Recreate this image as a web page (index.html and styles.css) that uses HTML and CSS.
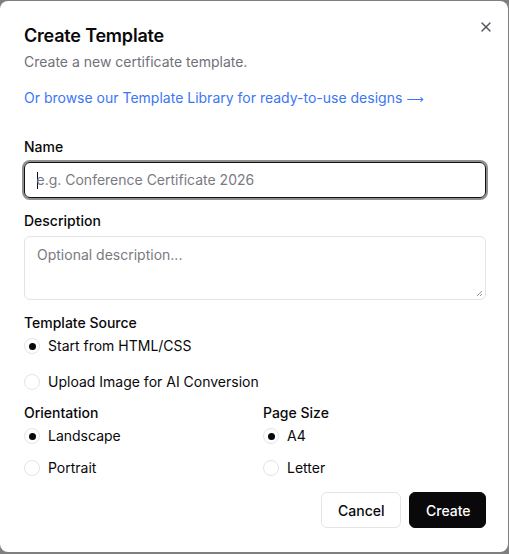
FILE: index.html
```html
<!DOCTYPE html>
<html lang="en">
<head>
<meta charset="utf-8">
<title>Create Template</title>
<link rel="stylesheet" href="styles.css">
</head>
<body>
<div class="dialog">
  <button class="close" aria-label="Close">
    <svg width="16" height="16" viewBox="0 0 24 24" fill="none" stroke="currentColor" stroke-width="2" stroke-linecap="round" stroke-linejoin="round"><path d="M18 6 6 18"/><path d="m6 6 12 12"/></svg>
  </button>
  <div class="header">
    <h2 class="title">Create Template</h2>
    <p class="subtitle">Create a new certificate template.</p>
    <a class="library-link" href="#">Or browse our Template Library for ready-to-use designs <span class="arrow">⟶</span></a>
  </div>
  <form class="form">
    <div class="field">
      <label class="label">Name</label>
      <div class="input focused"><span class="caret"></span><span class="placeholder">e.g. Conference Certificate 2026</span></div>
    </div>
    <div class="field">
      <label class="label">Description</label>
      <div class="textarea"><span class="placeholder">Optional description...</span><svg class="grip" width="8" height="8" viewBox="0 0 8 8"><path d="M7 2 2 7M7 5 5 7" stroke="#9a9a9a" stroke-width="1"/></svg></div>
    </div>
    <div class="field">
      <span class="label">Template Source</span>
      <div class="radios source">
        <div class="option"><span class="radio checked"></span><span>Start from HTML/CSS</span></div>
        <div class="option"><span class="radio"></span><span>Upload Image for AI Conversion</span></div>
      </div>
    </div>
    <div class="columns">
      <div class="field">
        <span class="label">Orientation</span>
        <div class="radios">
          <div class="option"><span class="radio checked"></span><span>Landscape</span></div>
          <div class="option"><span class="radio"></span><span>Portrait</span></div>
        </div>
      </div>
      <div class="field">
        <span class="label">Page Size</span>
        <div class="radios">
          <div class="option"><span class="radio checked"></span><span>A4</span></div>
          <div class="option"><span class="radio"></span><span>Letter</span></div>
        </div>
      </div>
    </div>
    <div class="footer">
      <button type="button" class="btn btn-outline">Cancel</button>
      <button type="button" class="btn btn-primary">Create</button>
    </div>
  </form>
</div>
</body>
</html>
```

FILE: styles.css
```css
* { box-sizing: border-box; }
html, body { margin: 0; padding: 0; }
body {
  background: #7f7f7f;
  font-family: Inter, "Noto Sans", sans-serif;
  color: #09090b;
  width: 509px;
  height: 554px;
  overflow: hidden;
}
.dialog {
  position: relative;
  margin-top: 1px;
  width: 508px;
  height: 551px;
  background: #fff;
  border-radius: 8px;
  padding: 21px 22px 24px 24px;
}
.close {
  position: absolute;
  top: 18px;
  left: 478px;
  width: 16px;
  height: 16px;
  padding: 0;
  border: 0;
  background: none;
  color: #52525b;
  display: flex;
}
.header { display: flex; flex-direction: column; }
.title {
  margin: 0;
  font-size: 18px;
  line-height: 28px;
  font-weight: 600;
  letter-spacing: -0.2px;
}
.subtitle {
  margin: 2px 0 0;
  font-size: 14px;
  line-height: 20px;
  color: #71717a;
}
.library-link {
  display: block;
  height: 20px;
  margin-top: 16px;
  font-size: 14px;
  line-height: 20px;
  color: #3b76f6;
  text-decoration: none;
}
.arrow { font-family: "DejaVu Sans", sans-serif; font-size: 12px; line-height: 0; }
.form { margin-top: 32px; display: flex; flex-direction: column; gap: 16px; }
.field { display: flex; flex-direction: column; gap: 8px; }
.label {
  font-size: 14px;
  line-height: 14px;
  font-weight: 450;
}
.input, .textarea {
  position: relative;
  border: 1px solid #e4e4e7;
  border-radius: 6px;
  font-size: 14px;
  line-height: 20px;
  padding: 8px 12px;
}
.input { height: 36px; display: flex; align-items: center; }
.input.focused {
  border: 1.5px solid #111;
  box-shadow: 0 0 0 2px #8f8f8f;
  padding-left: 11.5px;
}
.caret {
  width: 1px;
  height: 17px;
  background: #111;
  margin-right: -1px;
}
.textarea { height: 64px; }
.placeholder { color: #7a7a82; }
.grip { position: absolute; right: 2px; bottom: 2px; }
.radios { display: flex; flex-direction: column; gap: 16px; }
.radios.source { gap: 20px; }
.option {
  display: flex;
  align-items: center;
  gap: 8px;
  font-size: 14px;
  line-height: 16px;
}
.radio {
  width: 16px;
  height: 16px;
  border-radius: 50%;
  border: 1px solid #e4e4e7;
  display: flex;
  align-items: center;
  justify-content: center;
  flex: none;
}
.radio.checked::after {
  content: "";
  width: 7px;
  height: 7px;
  border-radius: 50%;
  background: #09090b;
}
.columns {
  display: grid;
  grid-template-columns: 239px 1fr;
}
.footer {
  display: flex;
  justify-content: flex-end;
  gap: 8px;
}
.btn {
  height: 36px;
  border-radius: 6px;
  font-family: inherit;
  font-size: 14px;
  font-weight: 500;
  padding: 0 16px;
  cursor: pointer;
}
.btn-outline { background: #fff; border: 1px solid #e4e4e7; color: #09090b; width: 80px; }
.btn-primary { background: #09090b; border: 1px solid #09090b; color: #fff; width: 77px; }
```
